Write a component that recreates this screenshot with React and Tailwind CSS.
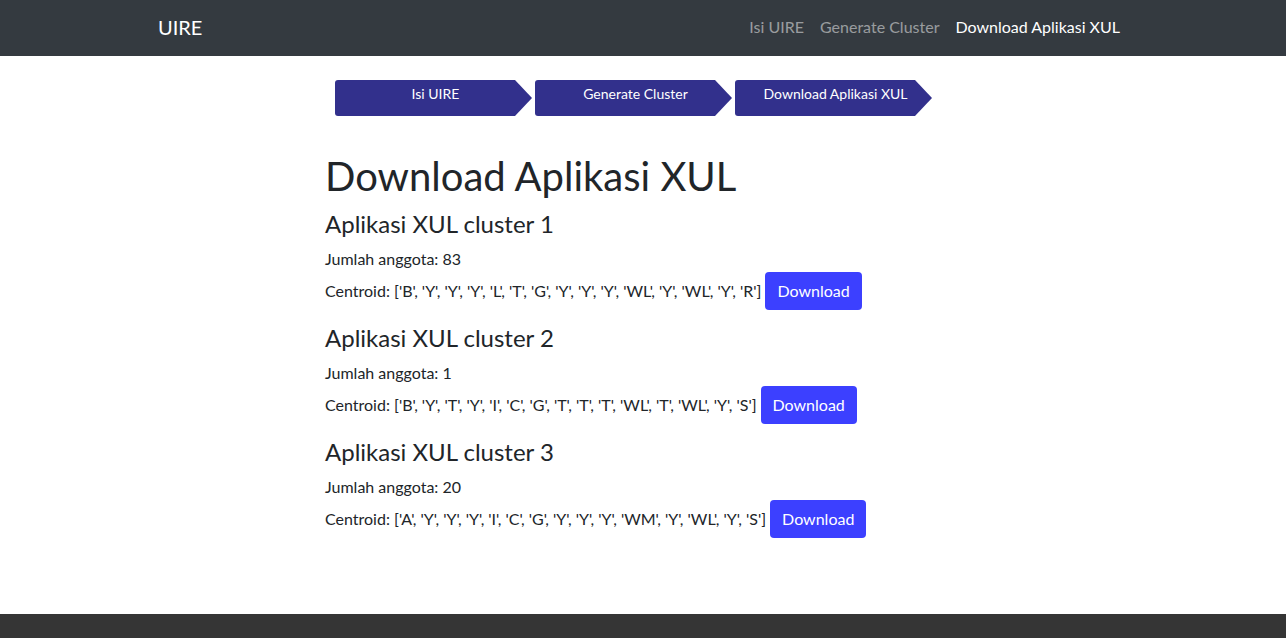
export default function App() {
  const clusters = [
    { n: 1, count: 83, c: "['B', 'Y', 'Y', 'Y', 'L', 'T', 'G', 'Y', 'Y', 'Y', 'WL', 'Y', 'WL', 'Y', 'R']" },
    { n: 2, count: 1, c: "['B', 'Y', 'T', 'Y', 'I', 'C', 'G', 'T', 'T', 'T', 'WL', 'T', 'WL', 'Y', 'S']" },
    { n: 3, count: 20, c: "['A', 'Y', 'Y', 'Y', 'I', 'C', 'G', 'Y', 'Y', 'Y', 'WM', 'Y', 'WL', 'Y', 'S']" },
  ];
  const steps = ["Isi UIRE", "Generate Cluster", "Download Aplikasi XUL"];
  return (
    <div className="min-h-[638px] flex flex-col bg-white text-[#212529]" style={{ fontFamily: "Lato, 'Open Sans', sans-serif" }}>
      <nav className="h-[56px] bg-[#343a40] flex items-center justify-between px-[158px] shrink-0">
        <span className="text-white text-[20px] leading-[30px] mt-[-2px]">UIRE</span>
        <div className="flex text-[16px] leading-6 mt-[-2px]">
          <span className="px-2 text-white/50">Isi UIRE</span>
          <span className="px-2 text-white/50">Generate Cluster</span>
          <span className="px-2 text-white">Download Aplikasi XUL</span>
        </div>
      </nav>
      <div className="flex-1">
        <div className="flex gap-[3px] ml-[335px] mt-[24px]">
          {steps.map((s) => (
            <div
              key={s}
              className="w-[197px] h-[36px] bg-[#32308c] rounded-l-[3px] text-white text-[14px] leading-5 pt-[4px] pl-[4px] text-center [clip-path:polygon(0_0,calc(100%-17px)_0,100%_50%,calc(100%-17px)_100%,0_100%)]"
            >
              {s}
            </div>
          ))}
        </div>
        <div className="ml-[325px] mt-[36px]">
          <h1 className="text-[40px] leading-[48px] mb-[9px]">Download Aplikasi XUL</h1>
          {clusters.map((k, i) => (
            <div key={k.n} className={i > 0 ? "mt-[13px]" : ""}>
              <h3 className="text-[24px] leading-[29px] mb-[9px]">Aplikasi XUL cluster {k.n}</h3>
              <p className="text-[16px] leading-6">Jumlah anggota: {k.count}</p>
              <div className="flex items-center mt-[1px] text-[16px] leading-6">
                <span className="mt-[-1px]">Centroid: {k.c}</span>
                <button className="ml-[4px] h-[38px] px-[12px] rounded-[4px] bg-[#3c40ff] text-white text-[16px] leading-6">
                  Download
                </button>
              </div>
            </div>
          ))}
        </div>
      </div>
      <footer className="h-[24px] bg-[#353535] shrink-0" />
    </div>
  );
}
